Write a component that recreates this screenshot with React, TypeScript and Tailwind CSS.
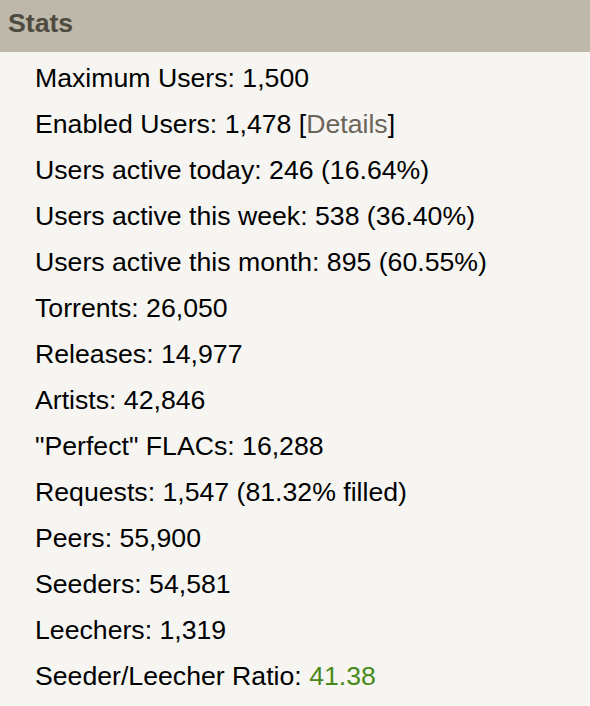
const rows: { label: string; value: React.ReactNode }[] = [
  { label: "Maximum Users", value: "1,500" },
  {
    label: "Enabled Users",
    value: (
      <>
        1,478 [<span className="text-[#6b6459]">Details</span>]
      </>
    ),
  },
  { label: "Users active today", value: "246 (16.64%)" },
  { label: "Users active this week", value: "538 (36.40%)" },
  { label: "Users active this month", value: "895 (60.55%)" },
  { label: "Torrents", value: "26,050" },
  { label: "Releases", value: "14,977" },
  { label: "Artists", value: "42,846" },
  { label: "\"Perfect\" FLACs", value: "16,288" },
  { label: "Requests", value: "1,547 (81.32% filled)" },
  { label: "Peers", value: "55,900" },
  { label: "Seeders", value: "54,581" },
  { label: "Leechers", value: "1,319" },
  {
    label: "Seeder/Leecher Ratio",
    value: <span className="text-[#4a8a1a]">41.38</span>,
  },
];

export default function App() {
  return (
    <div className="w-[590px] h-[706px] bg-[#f6f5f2] font-['Liberation_Sans',Arial,sans-serif]">
      <div className="h-[52px] bg-[#bdb8aa] pt-[8px] px-2">
        <h2 className="text-[26.67px] leading-[30px] font-bold text-[#4f4a40]">Stats</h2>
      </div>
      <ul className="pt-[3px] pl-[35px]">
        {rows.map((r) => (
          <li key={r.label} className="text-[26.67px] leading-[46px] text-black">
            {r.label}: {r.value}
          </li>
        ))}
      </ul>
    </div>
  );
}
